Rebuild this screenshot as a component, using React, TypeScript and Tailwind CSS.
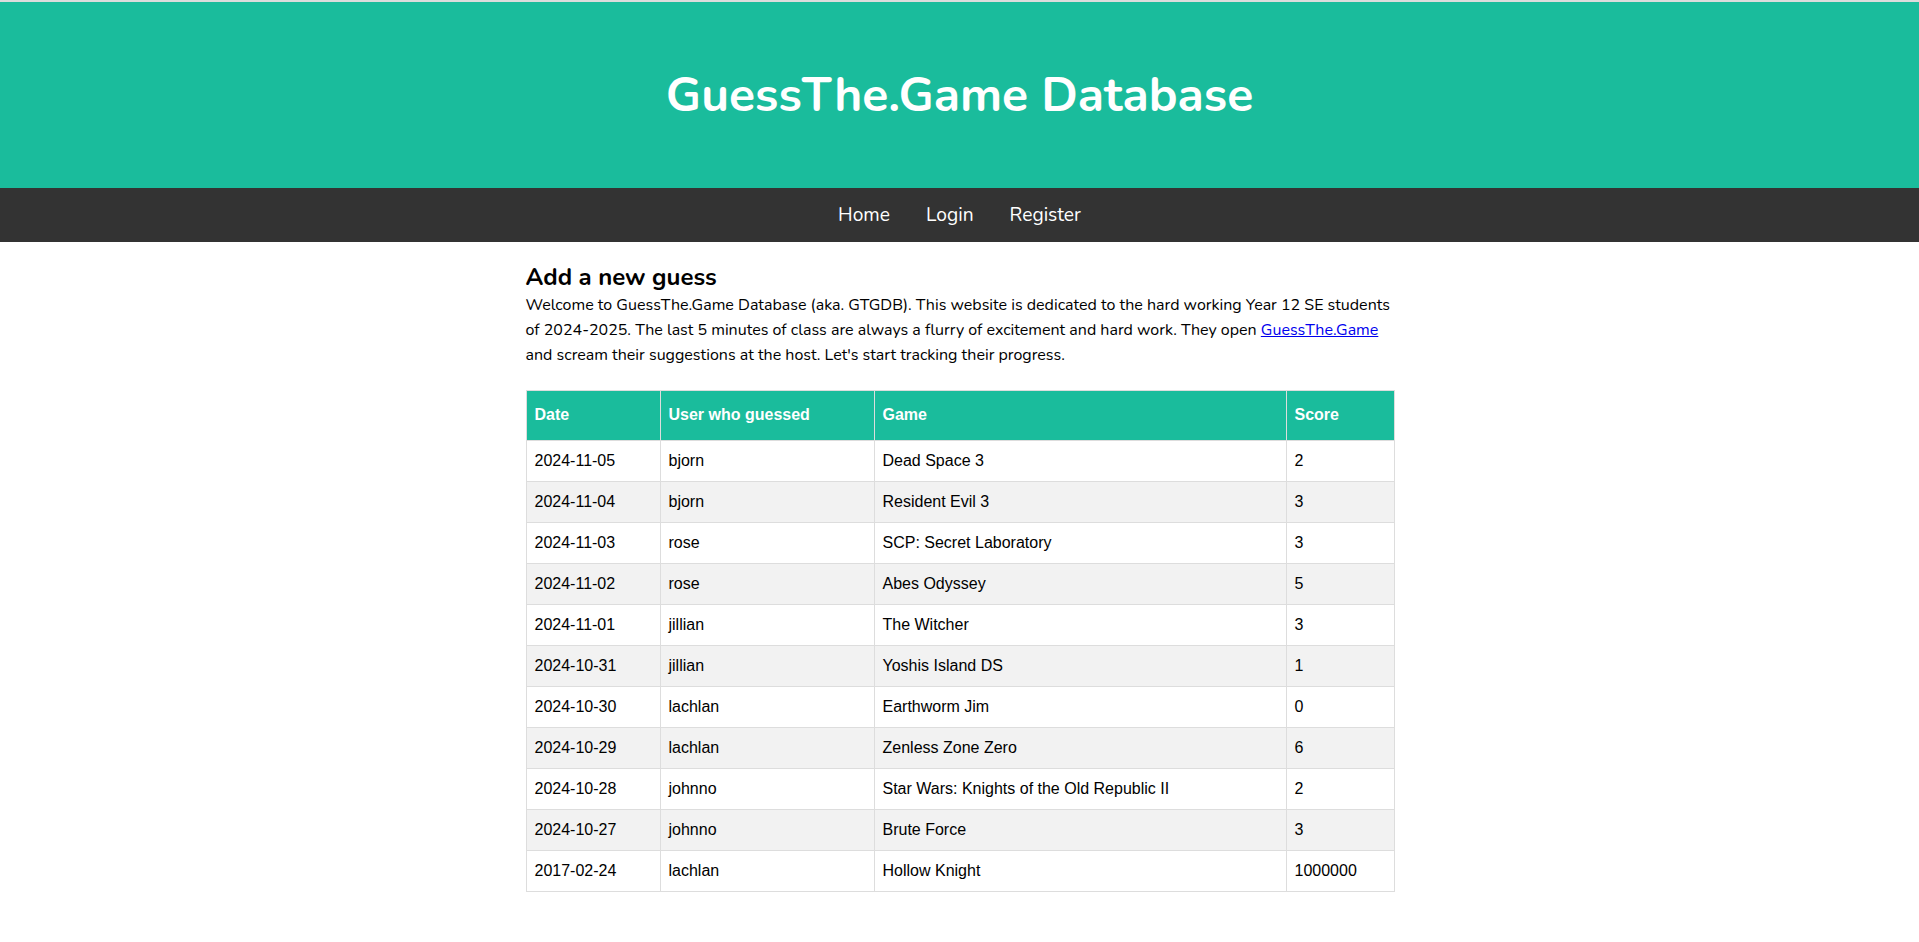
import React from 'react';

type Guess = { date: string; user: string; game: string; score: string };

const guesses: Guess[] = [
  { date: '2024-11-05', user: 'bjorn', game: 'Dead Space 3', score: '2' },
  { date: '2024-11-04', user: 'bjorn', game: 'Resident Evil 3', score: '3' },
  { date: '2024-11-03', user: 'rose', game: 'SCP: Secret Laboratory', score: '3' },
  { date: '2024-11-02', user: 'rose', game: 'Abes Odyssey', score: '5' },
  { date: '2024-11-01', user: 'jillian', game: 'The Witcher', score: '3' },
  { date: '2024-10-31', user: 'jillian', game: 'Yoshis Island DS', score: '1' },
  { date: '2024-10-30', user: 'lachlan', game: 'Earthworm Jim', score: '0' },
  { date: '2024-10-29', user: 'lachlan', game: 'Zenless Zone Zero', score: '6' },
  { date: '2024-10-28', user: 'johnno', game: 'Star Wars: Knights of the Old Republic II', score: '2' },
  { date: '2024-10-27', user: 'johnno', game: 'Brute Force', score: '3' },
  { date: '2017-02-24', user: 'lachlan', game: 'Hollow Knight', score: '1000000' },
];

const sans = "font-['Nunito','Lato','Noto_Sans',sans-serif]";

function Header() {
  return (
    <header>
      <div className="h-[2px] bg-[#dcdcdc]" />
      <div className="h-[186px] bg-[#1abc9c] flex items-center justify-center">
        <h1 className={`${sans} text-white font-bold text-[48px] leading-none`}>
          GuessThe.Game Database
        </h1>
      </div>
      <nav className="h-[54px] bg-[#333333] flex items-center justify-center">
        {['Home', 'Login', 'Register'].map(item => (
          <a key={item} href="#" className={`${sans} text-white text-[19.2px] px-[18px]`}>
            {item}
          </a>
        ))}
      </nav>
    </header>
  );
}

function GuessTable() {
  return (
    <table className="w-[868px] table-fixed border-collapse mt-[22px] font-['Liberation_Sans',Arial,sans-serif] text-[16px] leading-6">
      <colgroup>
        <col className="w-[134px]" />
        <col className="w-[214px]" />
        <col className="w-[412px]" />
        <col className="w-[108px]" />
      </colgroup>
      <thead>
        <tr className="bg-[#1abc9c] text-white">
          {['Date', 'User who guessed', 'Game', 'Score'].map(h => (
            <th key={h} className="border border-[#dddddd] px-2 pt-3 pb-[13px] text-left font-bold">
              {h}
            </th>
          ))}
        </tr>
      </thead>
      <tbody>
        {guesses.map((g, i) => (
          <tr key={g.date + g.game} className={i % 2 === 1 ? 'bg-[#f2f2f2]' : 'bg-white'}>
            <td className="border border-[#dddddd] p-2 text-black">{g.date}</td>
            <td className="border border-[#dddddd] p-2 text-black">{g.user}</td>
            <td className="border border-[#dddddd] p-2 text-black">{g.game}</td>
            <td className="border border-[#dddddd] p-2 text-black">{g.score}</td>
          </tr>
        ))}
      </tbody>
    </table>
  );
}

export default function App() {
  return (
    <div className="min-h-screen bg-white">
      <Header />
      <main className="w-[868px] mx-auto pt-5 pb-10">
        <h2 className={`${sans} text-[24px] leading-[31px] font-bold text-black`}>Add a new guess</h2>
        <p className={`${sans} text-[16px] leading-[25px] text-black`}>
          Welcome to GuessThe.Game Database (aka. GTGDB). This website is dedicated to the hard working Year 12 SE
          students of 2024-2025. The last 5 minutes of class are always a flurry of excitement and hard work. They open{' '}
          <a href="#" className="text-[#0000ee] underline">GuessThe.Game</a> and scream their suggestions at the host.
          Let's start tracking their progress.
        </p>
        <GuessTable />
      </main>
    </div>
  );
}
